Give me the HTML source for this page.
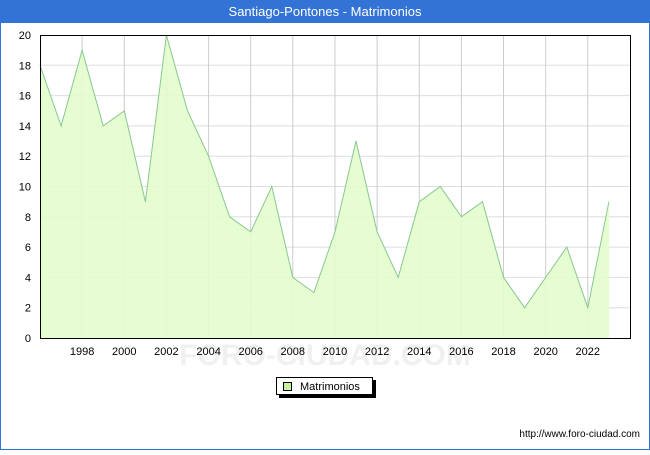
<!DOCTYPE html><html><head><style>body{margin:0;width:650px;height:450px;overflow:hidden;background:#fff;font-family:"Liberation Sans",sans-serif}</style></head><body>
<svg width="650" height="450" xmlns="http://www.w3.org/2000/svg" font-family="Liberation Sans, sans-serif">
<rect x="0" y="0" width="650" height="450" fill="#3373d6"/>
<rect x="1" y="23" width="648" height="426" fill="#fff"/>
<text x="325" y="16" fill="#fff" font-size="13" text-anchor="middle">Santiago-Pontones - Matrimonios</text>
<g stroke="#ddd" stroke-width="1">
<line x1="40" x2="630" y1="307.7" y2="307.7"/><line x1="40" x2="630" y1="277.4" y2="277.4"/><line x1="40" x2="630" y1="247.1" y2="247.1"/><line x1="40" x2="630" y1="216.8" y2="216.8"/><line x1="40" x2="630" y1="186.5" y2="186.5"/><line x1="40" x2="630" y1="156.2" y2="156.2"/><line x1="40" x2="630" y1="125.9" y2="125.9"/><line x1="40" x2="630" y1="95.6" y2="95.6"/><line x1="40" x2="630" y1="65.3" y2="65.3"/>
</g>
<g stroke="#ccc" stroke-width="1">
<line x1="82.1" x2="82.1" y1="35" y2="338"/><line x1="124.3" x2="124.3" y1="35" y2="338"/><line x1="166.4" x2="166.4" y1="35" y2="338"/><line x1="208.6" x2="208.6" y1="35" y2="338"/><line x1="250.7" x2="250.7" y1="35" y2="338"/><line x1="292.8" x2="292.8" y1="35" y2="338"/><line x1="335" x2="335" y1="35" y2="338"/><line x1="377.1" x2="377.1" y1="35" y2="338"/><line x1="419.3" x2="419.3" y1="35" y2="338"/><line x1="461.4" x2="461.4" y1="35" y2="338"/><line x1="503.5" x2="503.5" y1="35" y2="338"/><line x1="545.7" x2="545.7" y1="35" y2="338"/><line x1="587.8" x2="587.8" y1="35" y2="338"/>
</g>
<polygon fill="#e3fdcc" fill-opacity="0.9" points="40,338 40,65.3 61.1,125.9 82.1,50.2 103.2,125.9 124.3,110.8 145.4,201.7 166.4,35 187.5,110.8 208.6,156.2 229.6,216.8 250.7,231.9 271.8,186.5 292.8,277.4 313.9,292.6 335,231.9 356,141 377.1,231.9 398.2,277.4 419.3,201.7 440.3,186.5 461.4,216.8 482.5,201.7 503.5,277.4 524.6,307.7 545.7,277.4 566.8,247.1 587.8,307.7 608.9,201.7 608.9,338"/>
<polyline fill="none" stroke="#88c890" stroke-width="1" points="40,65.3 61.1,125.9 82.1,50.2 103.2,125.9 124.3,110.8 145.4,201.7 166.4,35 187.5,110.8 208.6,156.2 229.6,216.8 250.7,231.9 271.8,186.5 292.8,277.4 313.9,292.6 335,231.9 356,141 377.1,231.9 398.2,277.4 419.3,201.7 440.3,186.5 461.4,216.8 482.5,201.7 503.5,277.4 524.6,307.7 545.7,277.4 566.8,247.1 587.8,307.7 608.9,201.7"/>
<text x="325" y="365" font-size="30" fill="#f0f0f0" text-anchor="middle" font-weight="bold">FORO-CIUDAD.COM</text>
<rect x="40.5" y="35.5" width="590" height="303" fill="none" stroke="#000" stroke-width="1"/>
<g font-size="11" fill="#000" text-anchor="end">
<text x="31" y="342">0</text><text x="31" y="311.7">2</text><text x="31" y="281.4">4</text><text x="31" y="251.1">6</text><text x="31" y="220.8">8</text><text x="31" y="190.5">10</text><text x="31" y="160.2">12</text><text x="31" y="129.9">14</text><text x="31" y="99.6">16</text><text x="31" y="69.3">18</text><text x="31" y="39">20</text>
</g>
<g font-size="11" fill="#000" text-anchor="middle">
<text x="82.1" y="355">1998</text><text x="124.3" y="355">2000</text><text x="166.4" y="355">2002</text><text x="208.6" y="355">2004</text><text x="250.7" y="355">2006</text><text x="292.8" y="355">2008</text><text x="335" y="355">2010</text><text x="377.1" y="355">2012</text><text x="419.3" y="355">2014</text><text x="461.4" y="355">2016</text><text x="503.5" y="355">2018</text><text x="545.7" y="355">2020</text><text x="587.8" y="355">2022</text>
</g>
<rect x="279" y="380" width="97" height="18" fill="#000"/>
<rect x="276.5" y="377.5" width="96" height="17" fill="#fff" stroke="#000" stroke-width="1"/>
<rect x="283.5" y="382.5" width="8" height="8" fill="#c6f5a0" stroke="#000" stroke-width="1"/>
<text x="300" y="390" font-size="11">Matrimonios</text>
<text x="640" y="437" font-size="10" text-anchor="end">http://www.foro-ciudad.com</text>
</svg>
</body></html>
